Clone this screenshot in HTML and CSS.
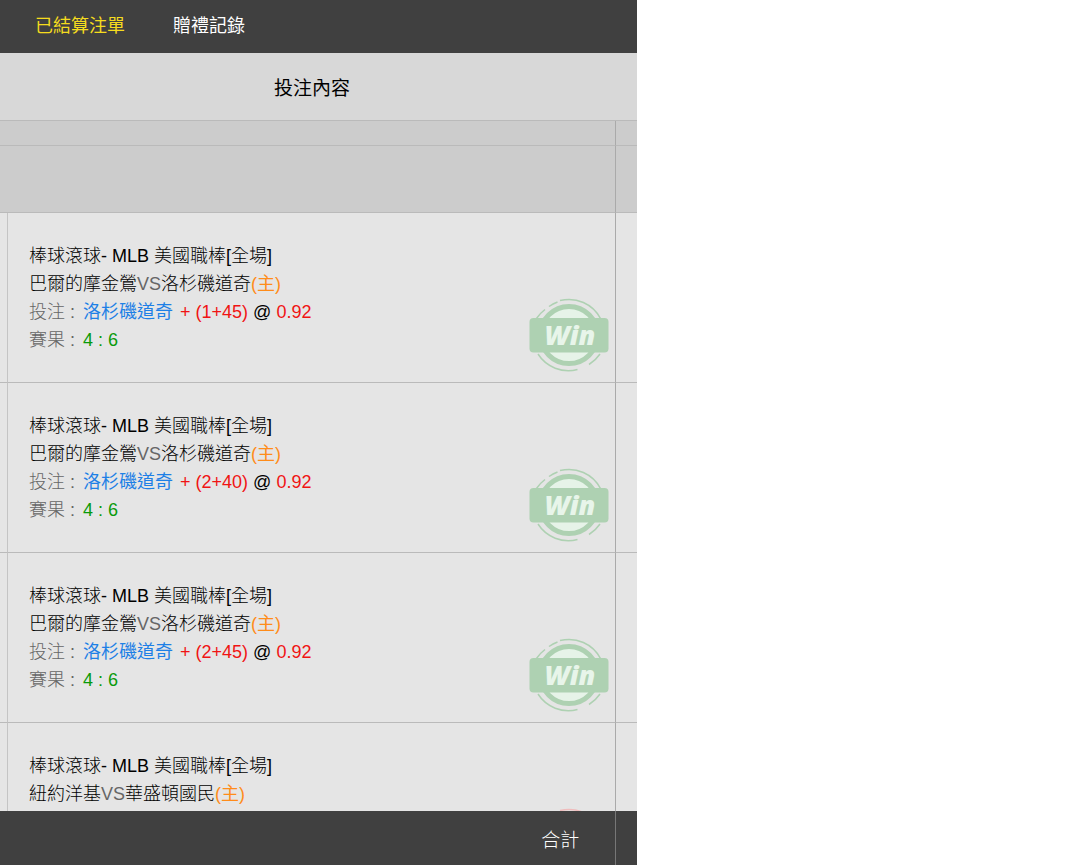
FILE: index.html
```
<!DOCTYPE html>
<html lang="zh-Hant">
<head>
  <meta charset="UTF-8">
  <title>已結算注單</title>
  <link rel="stylesheet" href="styles.css">
</head>
<body>
  <div class="panel">
    <nav class="tabs">
      <a href="#settled" class="active">已結算注單</a>
      <a href="#gifts">贈禮記錄</a>
    </nav>

    <div class="bets">
      <table>
        <colgroup>
          <col class="col-edge">
          <col>
          <col class="col-next">
        </colgroup>
        <thead>
          <tr>
            <th></th>
            <th>投注內容</th>
            <th></th>
          </tr>
        </thead>
        <tbody id="rows">
          <tr class="spacer"><td></td><td></td><td></td></tr>
          <tr class="group"><td></td><td></td><td></td></tr>
        </tbody>
      </table>
    </div>

    <div class="total">
      <span class="total-label">合計</span>
      <span class="total-next"></span>
    </div>
  </div>

  <!-- badge shapes -->
  <svg class="defs" aria-hidden="true">
    <symbol id="ring" viewBox="0 0 80 74">
      <circle class="glow" cx="40" cy="37" r="29"/>
      <circle class="thick" cx="40" cy="37" r="28.500"/>
      <path class="thin" d="M7.500 20.500A36 36 0 0 1 16 11.500M20 8.500A35 35 0 0 1 28.500 4M31 2.600A35.500 35.500 0 0 1 71.500 20.500M9 56A36 36 0 0 0 48.500 71.500M60 66.500A36 36 0 0 0 71 56"/>
      <rect class="plate" x="0.500" y="20" width="79" height="34.500" rx="4"/>
    </symbol>
  </svg>

  <script>
    const bets = [
      { home: '巴爾的摩金鶯', away: '洛杉磯道奇', pick: '洛杉磯道奇', line: '(1+45)', odds: '0.92', score: '4 : 6', win: true },
      { home: '巴爾的摩金鶯', away: '洛杉磯道奇', pick: '洛杉磯道奇', line: '(2+40)', odds: '0.92', score: '4 : 6', win: true },
      { home: '巴爾的摩金鶯', away: '洛杉磯道奇', pick: '洛杉磯道奇', line: '(2+45)', odds: '0.92', score: '4 : 6', win: true },
      { home: '紐約洋基', away: '華盛頓國民', win: false }
    ];

    const rows = document.getElementById('rows');

    bets.forEach((bet) => {
      const row = document.createElement('tr');
      row.className = 'bet';
      const result = bet.pick ? `
          <p class="muted">投注 : <span class="pick">${bet.pick}</span> <span class="odds">+ ${bet.line}</span> <span class="at">@</span> <span class="odds">${bet.odds}</span></p>
          <p class="muted">賽果 : <span class="score">${bet.score}</span></p>` : '';
      row.innerHTML = `
        <td></td>
        <td>
          <p class="league">棒球滾球- MLB 美國職棒[全場]</p>
          <p>${bet.home}<span class="versus">VS</span>${bet.away}<span class="host">(主)</span></p>${result}
          <svg class="badge ${bet.win ? 'win' : 'lose'}" viewBox="0 0 80 74">
            <use href="#ring"/>
            ${bet.win ? '<text x="41" y="47" text-anchor="middle">Win</text>' : ''}
          </svg>
        </td>
        <td></td>
      `;
      rows.appendChild(row);
    });
  </script>
</body>
</html>
```
FILE: styles.css
```
body {
  margin: 0;
  background-color: #fff;
  color: #000;
  font-family: "Liberation Sans", "Noto Sans CJK TC", sans-serif;
  font-size: 18px;
  font-weight: 300;
  line-height: 28px;
}

.panel {
  display: flex;
  flex-direction: column;
  width: 59vw;
  height: 100vh;
  background-color: #e5e5e5;
}

.tabs {
  display: flex;
  flex: none;
  gap: 48px;
  padding: 12px 35px 13px;
  background-color: #404040;
}

.tabs a {
  color: #fff;
  font-weight: 400;
  text-decoration: none;
}

.tabs a.active {
  color: #f5dc1e;
}

.bets {
  flex: 1;
  min-height: 0;
  overflow: hidden;
}

table {
  width: 100%;
  border-collapse: separate;
  border-spacing: 0;
  table-layout: fixed;
}

.col-edge {
  width: 8px;
}

.col-next {
  width: 21px;
}

th, td {
  box-sizing: border-box;
  padding: 0;
  border-bottom: 1px solid #bababa;
}

th {
  height: 68px;
  padding-top: 4px;
  background-color: #d8d8d8;
  font-size: 19px;
  font-weight: 400;
}

td:nth-child(2) {
  border-right: 1px solid #aaa;
}

.spacer td {
  height: 25px;
  background-color: #ccc;
}

.group td {
  height: 67px;
  background-color: #ccc;
}

.bet td {
  height: 170px;
  vertical-align: top;
}

.bet td:first-child {
  border-right: 1px solid #c4c4c4;
}

.bet td:nth-child(2) {
  position: relative;
  padding: 29px 21px 28px;
}

p {
  margin: 0;
}

.versus,
.muted {
  color: #666;
}

.host {
  color: #ff8c1a;
  font-weight: 400;
}

.pick {
  margin: 0 2px 0 3px;
  color: #1e80e6;
  font-weight: 400;
}

.odds {
  color: #f01414;
}

.at {
  color: #000;
}

.score {
  margin-left: 3px;
  color: #0a9a0a;
}

.badge {
  position: absolute;
  right: 6px;
  top: 85px;
  width: 80px;
  height: 74px;
}

.win {
  color: #aed1b2;
}

.lose {
  color: #efbcbc;
}

.glow {
  fill: #e6f3e8;
}

.thick {
  fill: none;
  stroke: currentColor;
  stroke-width: 5;
}

.thin {
  fill: none;
  stroke: currentColor;
  stroke-width: 1.5;
}

.plate {
  fill: currentColor;
}

.badge text {
  fill: #e8f5ea;
  font-family: "Open Sans", "Liberation Sans", sans-serif;
  font-size: 27px;
  font-style: italic;
  font-weight: 800;
}

.defs {
  position: absolute;
  width: 0;
  height: 0;
}

.total {
  display: flex;
  flex: none;
  height: 54px;
  background-color: #404040;
  color: #fff;
  font-size: 19px;
  line-height: 60px;
}

.total-label {
  flex: 1;
  padding-right: 36px;
  border-right: 1px solid #777;
  text-align: right;
}

.total-next {
  width: 21px;
}
```
